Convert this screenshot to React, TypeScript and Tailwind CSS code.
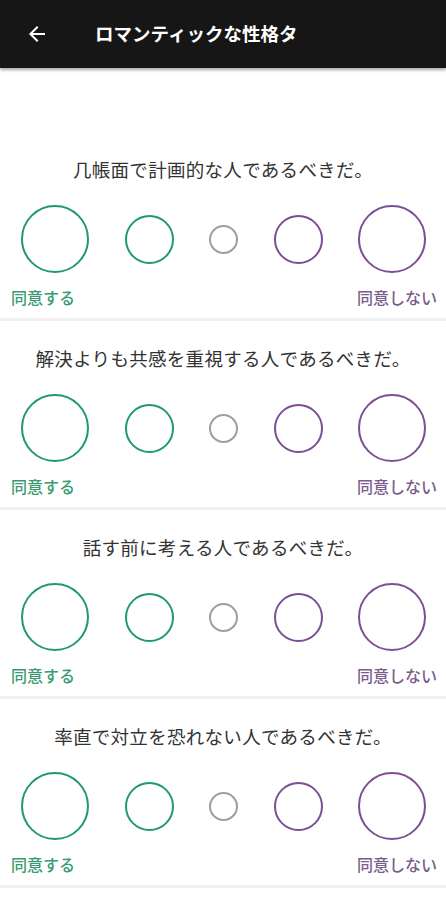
const questions = [
  "几帳面で計画的な人であるべきだ。",
  "解決よりも共感を重視する人であるべきだ。",
  "話す前に考える人であるべきだ。",
  "率直で対立を恐れない人であるべきだ。",
];

function Scale() {
  return (
    <div className="flex items-center justify-between pl-[21px] pr-[20px] mt-[24px]">
      <div className="w-[68px] h-[68px] rounded-full border-[2.5px] border-[#1f9a6b]" />
      <div className="w-[49px] h-[49px] rounded-full border-[2.5px] border-[#1f9a6b]" />
      <div className="w-[29px] h-[29px] rounded-full border-[2.5px] border-[#9e9e9e]" />
      <div className="w-[49px] h-[49px] rounded-full border-[2.5px] border-[#7b4f96]" />
      <div className="w-[68px] h-[68px] rounded-full border-[2.5px] border-[#7b4f96]" />
    </div>
  );
}

function Question({ text }: { text: string }) {
  return (
    <div className="pt-[25px] pb-[11px] border-b-[3px] border-[#f0f0f0]">
      <p className="text-center text-[18.5px] leading-[24px] tracking-[0.3px] text-[#333333]">{text}</p>
      <Scale />
      <div className="flex justify-between pl-[11px] pr-[9px] mt-[14px] text-[16px] leading-[20px] font-medium">
        <span className="text-[#3a9b72]">同意する</span>
        <span className="text-[#7a5d8c]">同意しない</span>
      </div>
    </div>
  );
}

export default function App() {
  return (
    <div
      className="w-[446px] h-[900px] overflow-hidden bg-white"
      style={{ fontFamily: '"Noto Sans CJK JP", "Noto Sans", sans-serif' }}
    >
      <header className="h-[68px] bg-[#161616] flex items-center shadow-[0_2px_3px_rgba(0,0,0,0.35)] relative z-10">
        <svg className="ml-[25px]" width="24" height="24" viewBox="0 0 24 24" fill="white">
          <path d="M20 11H7.83l5.59-5.59L12 4l-8 8 8 8 1.41-1.41L7.83 13H20v-2z" />
        </svg>
        <h1 className="ml-[46px] text-white text-[18.5px] font-bold">ロマンティックな性格タ</h1>
      </header>
      <main className="pt-[64px]">
        {questions.map((q) => (
          <Question key={q} text={q} />
        ))}
      </main>
    </div>
  );
}
